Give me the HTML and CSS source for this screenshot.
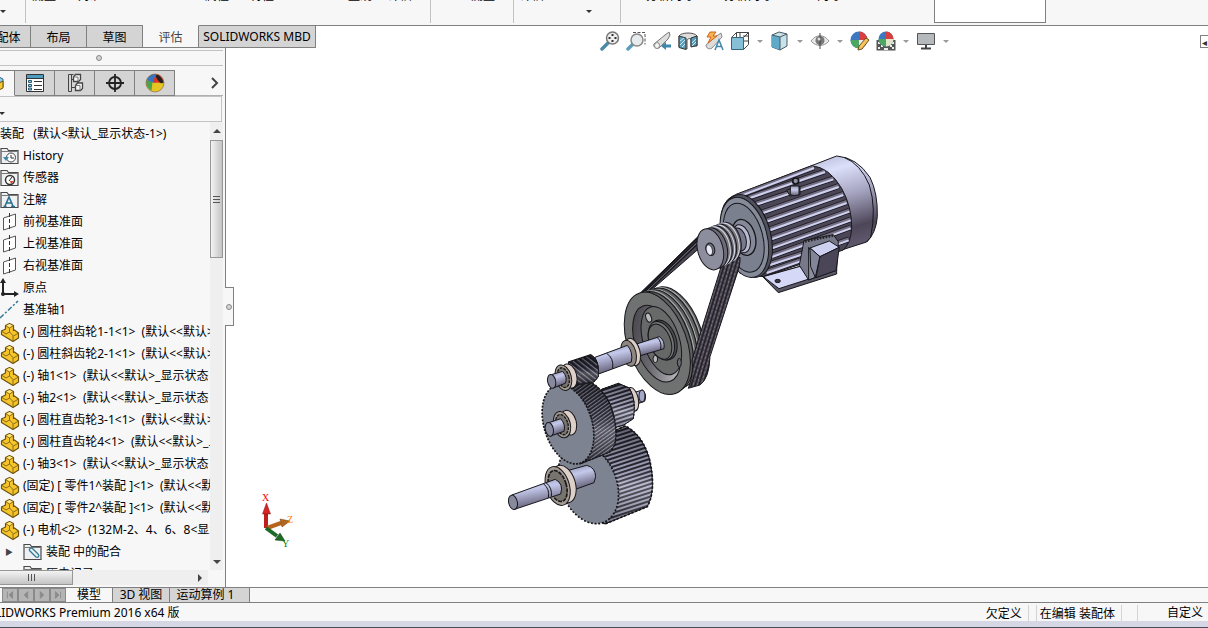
FILE: index.html
```html
<!DOCTYPE html>
<html lang="zh-CN">
<head>
  <meta charset="utf-8">
  <title>SOLIDWORKS Premium 2016 x64 版</title>
  <link rel="stylesheet" href="styles.css">
</head>
<body>
  <svg class="defs" width="0" height="0" aria-hidden="true">
    <symbol id="part" viewBox="0 0 20 20">
      <path d="M1.500 9l4-2V3.500l4-2 4 2v5l1-.5 4 3v5l-5.500 3.500-11.500-7z" fill="#f6c52b" stroke="#6b5210" stroke-width="1.200" stroke-linejoin="round"/>
      <path d="M5.500 3.500l4 2.500 4-2.500M9.500 6v4l-3.500 2-4.500-3M9.500 10l4 4 5-3M13 14v5.500" fill="none" stroke="#8a6a14"/>
      <path d="M6.500 3.500l3-1.500 3 1.500-3 1.700z" fill="#ffe680"/>
    </symbol>
    <symbol id="folder" viewBox="0 0 20 20">
      <path d="M1 17.500V2.500h6l1.500 2h9.500v13z" fill="#eef0f2" stroke="#4a4a4a" stroke-width="1.200"/>
      <path d="M1.500 5.500h16" stroke="#777"/>
    </symbol>
    <symbol id="plane" viewBox="0 0 20 20">
      <path d="M3.500 6l12-4v12l-12 4z" fill="#fff" stroke="#555"/>
      <path d="M9.500 1v18" stroke="#333" stroke-dasharray="4 2"/>
    </symbol>
  </svg>

  <header class="ribbon">
    <button class="more" aria-label="更多"></button>
    <button class="cmd c1">测量</button>
    <button class="cmd c2">对准</button>
    <button class="cmd c3">属性</button>
    <button class="cmd c4">特性</button>
    <button class="cmd c5">直观</button>
    <button class="cmd c6">评估</button>
    <span class="sep"></span>
    <button class="cmd c7">测量</button>
    <span class="sep"></span>
    <button class="cmd c8">评估</button>
    <button class="more-down" aria-label="更多评估"></button>
    <span class="sep"></span>
    <button class="cmd c9">分析向导</button>
    <button class="cmd c10">分析向导</button>
    <button class="cmd c11">向导</button>
    <div class="ribbon-box"></div>
  </header>

  <div class="command-row">
    <nav class="tabs">
      <button class="tab first">装配体</button>
      <button class="tab">布局</button>
      <button class="tab">草图</button>
      <button class="tab active">评估</button>
      <button class="tab wide">SOLIDWORKS MBD</button>
    </nav>
    <div class="view-tools">
      <button class="tool" aria-label="整屏显示全图"><svg viewBox="0 0 20 20"><path d="M2 18l6-6" stroke="#4c88a8" stroke-width="3.500" stroke-linecap="round"/><circle cx="12.500" cy="7" r="6" fill="#eee" stroke="#777" stroke-width="1.500"/><path d="M12.500 3v2M12.500 9v2M8.500 7h2M14.500 7h2" stroke="#333" stroke-width="2"/></svg></button>
      <button class="tool" aria-label="局部放大"><svg viewBox="0 0 20 20"><path d="M7 1.500h12v12" fill="none" stroke="#555" stroke-dasharray="3 1.500"/><path d="M2 18l5-5" stroke="#5a9dbd" stroke-width="3.500" stroke-linecap="round"/><circle cx="11" cy="9" r="6" fill="#e6ebed" stroke="#888" stroke-width="1.500"/></svg></button>
      <button class="tool" aria-label="上一视图"><svg viewBox="0 0 20 20"><path d="M2 13L13 4l4-3 1 3-2 4-9 9c-3 1-6-1-5-4z" fill="#ddd" stroke="#777"/><ellipse cx="5" cy="14.500" rx="2.500" ry="3" fill="#f5f5f5" stroke="#888"/><path d="M9 15l5-4v2.500h5v3h-5V19z" fill="#3e87aa"/></svg></button>
      <button class="tool" aria-label="剖面视图"><svg viewBox="0 0 20 20"><path d="M1 5c2-4 16-4 18 0v10h-6V8c-2-1-3 0-4 1v9l-8-2z" fill="#ddd" stroke="#555"/><path d="M1 5l7 2v11.500l-7-2zM13 7l6-2v9.500l-6 1.500z" fill="#5aa0bd" stroke="#333"/><path d="M2 10l4-3M2 14l5-5M4 16l3-3M14 12l4-4M14 15l4-4" stroke="#cde7f0"/></svg></button>
      <button class="tool" aria-label="动态注解视图"><svg viewBox="0 0 20 20"><path d="M2 14l9-8 6-4 1 4-10 11c-3 2-6 0-6-3z" fill="#ddd" stroke="#888"/><path d="M6 1h6L9 5h4L4 12l3-6H3z" fill="#f5b44c" stroke="#d3601f"/><path d="M11 19l4-10 4 10M12.500 15.500h5" fill="none" stroke="#3e87aa" stroke-width="1.500"/></svg></button>
      <button class="tool" aria-label="视图定向"><svg viewBox="0 0 20 20"><path d="M1.500 6.500l5-5h12v12l-5 5M13.500 6.500l5-5M6.500 1.500v5M10 1v5M13 5h5M13 10h5" fill="none" stroke="#444"/><path d="M1.500 6.500h12v12h-12z" fill="#86bfd6" stroke="#34667d"/></svg></button>
      <button class="drop" aria-label="更多视图定向"></button>
      <button class="tool" aria-label="显示样式"><svg viewBox="0 0 20 20"><path d="M2 4l7-3 8 2v12l-7 4-8-3z" fill="#c8e2ec" stroke="#4a5961"/><path d="M2 4l8 2v13l-8-3z" fill="#5faac8"/><path d="M2 4l8 2 7-3M10 6v13" fill="none" stroke="#4a5961"/></svg></button>
      <button class="drop" aria-label="更多显示样式"></button>
      <button class="tool" aria-label="隐藏/显示项目"><svg viewBox="0 0 20 20"><path d="M1 10c5-7 13-7 18 0-5 6-13 6-18 0z" fill="#e8e8e8" stroke="#999"/><circle cx="10" cy="9.500" r="4.500" fill="#777"/><path d="M10 2v16" stroke="#444"/><circle cx="9" cy="8" r="1.500" fill="#ddd"/></svg></button>
      <button class="drop" aria-label="更多显示项目"></button>
      <button class="tool" aria-label="编辑外观"><svg viewBox="0 0 20 20"><circle cx="9" cy="9" r="8.500" fill="#3c78c0"/><path d="M9 .5a8.500 8.500 0 018.500 8.500H9z" fill="#d84040"/><path d="M.5 9H9v8.500A8.500 8.500 0 01.5 9z" fill="#4ca760"/><path d="M9 9h8.500A8.500 8.500 0 019 17.500z" fill="#eee"/><path d="M8 19l1-4 7-8 3 2-7 9z" fill="#f7c45c" stroke="#6d4d21"/></svg></button>
      <button class="tool" aria-label="应用布景"><svg viewBox="0 0 20 20"><path d="M.5 9h19v10.500H.5z" fill="#555"/><path d="M2 11h2v2H2zM16 11h2v2h-2zM5 14h2v2H5zM2 16h2v2H2zM8 17h4v2H8zM14 14h2v2h-2zM16 16h2v2h-2z" fill="#eee"/><circle cx="10" cy="8" r="7.500" fill="#3c78c0"/><path d="M10 .5A7.500 7.500 0 0117.500 8H10z" fill="#d84040"/><path d="M2.500 8H10v7.500A7.500 7.500 0 012.500 8z" fill="#4ca760"/><path d="M10 8h7.500a7.500 7.500 0 01-7.500 7.500z" fill="#dfe6c8"/></svg></button>
      <button class="drop" aria-label="更多布景"></button>
      <button class="tool" aria-label="视图设定"><svg viewBox="0 0 20 20"><path d="M1.500 2.500h17v11h-17z" fill="#b5b9bc" stroke="#555"/><path d="M10 14v3M5 17.500h10" stroke="#444" stroke-width="2"/></svg></button>
      <button class="drop" aria-label="更多视图设定"></button>
    </div>
    <button class="pane-toggle" aria-label="展开任务窗格">◂</button>
  </div>

  <main class="workspace">
    <aside class="panel">
      <div class="grip"><i class="dot"></i></div>
      <div class="feature-tabs">
        <button class="ftab first active" aria-label="特征树"><svg viewBox="0 0 20 20"><path d="M2 6l8-4 8 4v8l-8 4-8-4z" fill="#8fcbe6" stroke="#34667d"/><path d="M10 12l8-4v7l-8 4z" fill="#f3c92f" stroke="#6b5210"/></svg></button>
        <button class="ftab" aria-label="属性"><svg viewBox="0 0 20 20"><path d="M1.500 1.500h17v17h-17z" fill="#fff" stroke="#333"/><path d="M2 2h16v3H2z" fill="#4c9cc0"/><path d="M2 5.500h16" stroke="#333"/><path d="M3.500 7.500h3v2h-3zM3.500 11.500h3v2h-3zM3.500 15h3v2h-3z" fill="#9bd0e4" stroke="#245a75"/><path d="M9 8.500h8M9 12.500h8M9 16.500h8" stroke="#333"/></svg></button>
        <button class="ftab" aria-label="配置"><svg viewBox="0 0 20 20"><path d="M3.500 1.500h5M3.500 1.500v17h3v-17M6.500 6.500h3M6.500 14.500h4" fill="none" stroke="#444"/><path d="M8.500 4l2-2.500h5v5l-2 2h-5zM10.500 12.500l2-2.500h5v5.500l-2 2h-5z" fill="#f7f7f7" stroke="#444" stroke-width="1.300"/><path d="M8.500 4h4.500v4.500M10.500 12.500H15v5" fill="none" stroke="#777"/></svg></button>
        <button class="ftab" aria-label="尺寸专家"><svg viewBox="0 0 20 20"><circle cx="10" cy="10" r="6" fill="none" stroke="#222" stroke-width="1.800"/><path d="M10 1v18M1 10h18" stroke="#222" stroke-width="1.800"/></svg></button>
        <button class="ftab" aria-label="显示"><svg viewBox="0 0 20 20"><circle cx="10" cy="10" r="9" fill="#e5c522"/><path d="M10 10L2 7C4 2 8 1 11 1z" fill="#3476c4"/><path d="M1.500 7l6 2-1 8.500C2 15 .5 11 1.500 7z" fill="#48a34c"/><path d="M10 1c5 0 8 3 9 9l-11.500-.5z" fill="#da3327"/><path d="M2 7c1-4 5-6 9-6L7.500 9.500z" fill="#3476c4"/><ellipse cx="14.500" cy="6" rx="2" ry="5" transform="rotate(-38 14.500 6)" fill="#222"/><circle cx="10" cy="10" r="9" fill="none" stroke="#8a6a4a" stroke-width=".7"/></svg></button>
        <button class="expand" aria-label="展开"><svg viewBox="0 0 10 12"><path d="M2 1l5 5-5 5" fill="none" stroke="#444" stroke-width="2"/></svg></button>
      </div>
      <div class="filter"><button class="drop dark" aria-label="过滤器"></button><input type="text" aria-label="过滤特征树"></div>
      <div class="tree-area">
        <ul class="tree">
          <li class="root">装配&nbsp;&nbsp; (默认&lt;默认_显示状态-1&gt;)</li>
          <li><svg viewBox="0 0 20 20"><use href="#folder"/><circle cx="11" cy="11.500" r="4.500" fill="#fff" stroke="#444"/><path d="M11 9v3h3" fill="none" stroke="#333"/><path d="M3 11h6l-3 4z" fill="#3c86a8"/></svg>History</li>
          <li><svg viewBox="0 0 20 20"><use href="#folder"/><circle cx="10" cy="12" r="4.500" fill="#fff" stroke="#333" stroke-width="1.500"/><path d="M9 13l3-4" stroke="#222"/><path d="M10 13h4l-3 3z" fill="#d8411f"/></svg>传感器</li>
          <li><svg viewBox="0 0 20 20"><use href="#folder"/><path d="M5 16l4-9 4 9M6.500 13h5M3.500 16.500h3M11 16.500h4" fill="none" stroke="#2a7092" stroke-width="1.600"/></svg>注解</li>
          <li><svg><use href="#plane"/></svg>前视基准面</li>
          <li><svg><use href="#plane"/></svg>上视基准面</li>
          <li><svg><use href="#plane"/></svg>右视基准面</li>
          <li><svg viewBox="0 0 20 20"><path d="M3 3v13h13" fill="none" stroke="#222" stroke-width="2"/><path d="M3 0l3 5H0zM19 16l-5-3v6z" fill="#222"/><circle cx="3" cy="16" r="2" fill="#222"/></svg>原点</li>
          <li><svg viewBox="0 0 20 20"><path d="M0 18L18 1" stroke="#2f7898" stroke-width="1.500" stroke-dasharray="5 2 2 2"/></svg>基准轴1</li>
          <li><svg><use href="#part"/></svg>(-) 圆柱斜齿轮1-1&lt;1&gt;&nbsp; (默认&lt;&lt;默认&gt;_显示状态 1&gt;)</li>
          <li><svg><use href="#part"/></svg>(-) 圆柱斜齿轮2-1&lt;1&gt;&nbsp; (默认&lt;&lt;默认&gt;_显示状态 1&gt;)</li>
          <li><svg><use href="#part"/></svg>(-) 轴1&lt;1&gt;&nbsp; (默认&lt;&lt;默认&gt;_显示状态 1&gt;)</li>
          <li><svg><use href="#part"/></svg>(-) 轴2&lt;1&gt;&nbsp; (默认&lt;&lt;默认&gt;_显示状态 1&gt;)</li>
          <li><svg><use href="#part"/></svg>(-) 圆柱直齿轮3-1&lt;1&gt;&nbsp; (默认&lt;&lt;默认&gt;_显示状态 1&gt;)</li>
          <li><svg><use href="#part"/></svg>(-) 圆柱直齿轮4&lt;1&gt;&nbsp; (默认&lt;&lt;默认&gt;_显示状态 1&gt;)</li>
          <li><svg><use href="#part"/></svg>(-) 轴3&lt;1&gt;&nbsp; (默认&lt;&lt;默认&gt;_显示状态 1&gt;)</li>
          <li><svg><use href="#part"/></svg>(固定) [ 零件1^装配 ]&lt;1&gt;&nbsp; (默认&lt;&lt;默认&gt;</li>
          <li><svg><use href="#part"/></svg>(固定) [ 零件2^装配 ]&lt;1&gt;&nbsp; (默认&lt;&lt;默认&gt;</li>
          <li><svg><use href="#part"/></svg>(-) 电机&lt;2&gt;&nbsp; (132M-2、4、6、8&lt;显示状态&gt;)</li>
          <li class="child"><span class="twisty">▶</span><svg viewBox="0 0 20 20"><use href="#folder"/><path d="M13 15l-6-6c-2-2 1-4 3-2l5 5c2 2 0 4-2 3l-5-5" fill="none" stroke="#2f7898" stroke-width="1.300"/></svg>装配 中的配合</li>
          <li class="child"><span class="twisty"></span><svg><use href="#folder"/></svg>历史记录</li>
        </ul>
        <div class="vscroll"><span class="up"></span><span class="thumb"></span><span class="down"></span></div>
      </div>
      <div class="hscroll"><span class="thumb"></span><span class="right"></span></div>
      <button class="splitter" aria-label="隐藏面板"><i class="dot"></i></button>
    </aside>

    <section class="viewport">
      <svg class="scene" viewBox="226 48 982 539" role="img" aria-label="带传动减速器装配模型">
        <defs>
          <linearGradient id="metal" x1="0" y1="0" x2="0" y2="1"><stop offset="0" stop-color="#9a9dbb"/><stop offset=".4" stop-color="#c9cbea"/><stop offset="1" stop-color="#5d5970"/></linearGradient>
          <linearGradient id="shaft" x1="0" y1="0" x2=".3" y2="1"><stop offset="0" stop-color="#8a8ca8"/><stop offset=".4" stop-color="#c4c8ea"/><stop offset="1" stop-color="#5d5970"/></linearGradient>
          <linearGradient id="cap" x1="0" y1="0" x2=".2" y2="1"><stop offset="0" stop-color="#b4b8d4"/><stop offset=".2" stop-color="#dcdffa"/><stop offset=".5" stop-color="#a5a4c0"/><stop offset=".85" stop-color="#4d4658"/><stop offset="1" stop-color="#5d566a"/></linearGradient>
          <linearGradient id="rim" x1="0" y1="0" x2="1" y2="1"><stop offset="0" stop-color="#3c3940"/><stop offset=".45" stop-color="#6b6970"/><stop offset="1" stop-color="#d6d6da"/></linearGradient>
          <linearGradient id="lit" x1="0" y1="0" x2="0" y2="1"><stop offset="0" stop-color="#000" stop-opacity=".45"/><stop offset=".4" stop-color="#000" stop-opacity=".1"/><stop offset=".6" stop-color="#fff" stop-opacity=".2"/><stop offset="1" stop-color="#000" stop-opacity=".3"/></linearGradient>
          <pattern id="helix" width="10" height="9" patternUnits="userSpaceOnUse" patternTransform="rotate(-36)"><path d="M0 0h10v9H0z" fill="#25232c"/><path d="M0 5h10" stroke="#a9abc4" stroke-width="3"/></pattern>
          <pattern id="helix2" width="10" height="12" patternUnits="userSpaceOnUse" patternTransform="rotate(38)"><path d="M0 0h10v12H0z" fill="#211f28"/><path d="M0 5h10" stroke="#9a9cb6" stroke-width="3"/></pattern>
          <pattern id="spur" width="10" height="12" patternUnits="userSpaceOnUse" patternTransform="rotate(-18)"><path d="M0 0h10v12H0z" fill="#2b2832"/><path d="M0 6h10" stroke="#c4c7e6" stroke-width="5"/></pattern>
          <pattern id="belt" width="11" height="14" patternUnits="userSpaceOnUse" patternTransform="rotate(17)"><path d="M0 0h11v14H0z" fill="#47434f"/><path d="M2 0v14" stroke="#111" stroke-width="3"/><path d="M7 0v9" stroke="#8a8796" stroke-width="2"/></pattern>
        </defs>

        <!-- motor -->
        <g transform="translate(690 150) scale(.3333)" stroke="#17161b" stroke-width="3" stroke-linejoin="round">
          <path d="M365 47L440 18Q500 22 540 82Q564 130 562 200Q558 250 530 276L455 300z" fill="url(#cap)"/>
          <path d="M462 22Q512 42 538 105Q560 175 542 262L530 276" fill="none"/>
          <path d="M92 215Q92 155 130 137L365 47Q418 52 455 115Q486 170 485 235Q482 280 460 300L220 380L150 370z" fill="#4a4656"/>
          <g stroke="#1c1a22" stroke-width="17">
            <path d="M140 140L372 52M168 146L405 64M190 164L430 85M208 190L446 108M224 214L460 132M234 240L470 156M242 266L478 182M246 292L482 208M246 318L482 232M240 342L345 308M230 366L340 328M440 281L476 268"/>
          </g>
          <g stroke="#756f82" stroke-width="12">
            <path d="M140 140L372 52M168 146L405 64M190 164L430 85M208 190L446 108M224 214L460 132M234 240L470 156M242 266L478 182M246 292L482 208M246 318L482 232M240 342L345 308M230 366L340 328M440 281L476 268"/>
          </g>
          <g stroke="#ced1f0" stroke-width="6">
            <path d="M140 142L372 54M168 148L405 66M190 167L430 88M208 193L446 111M224 217L460 135M234 243L470 159M242 269L478 185M246 295L482 211M246 321L482 235M240 345L345 311M230 369L340 331M440 284L476 271"/>
          </g>
          <ellipse cx="172" cy="258" rx="70" ry="127" transform="rotate(-15 172 258)" fill="#50515e"/>
          <ellipse cx="163" cy="262" rx="68" ry="123" transform="rotate(-15 163 262)" fill="#858b99"/>
          <ellipse cx="161" cy="263" rx="57" ry="106" transform="rotate(-15 161 263)" fill="#7b808e"/>
          <ellipse cx="162" cy="262" rx="34" ry="55" transform="rotate(-15 162 262)" fill="#858998" stroke-width="4"/>
          <ellipse cx="155" cy="266" rx="25" ry="43" transform="rotate(-15 155 266)" fill="#b8bad0"/>
          <ellipse cx="148" cy="268" rx="20" ry="35" transform="rotate(-15 148 268)" fill="#777a8b"/>
          <!-- foot and terminal box -->
          <path d="M218 380L342 346L360 385L440 358V372L265 428z" fill="#5a5767"/>
          <path d="M220 380L342 346L357 387L267 416z" fill="#d5d8f6"/>
          <ellipse cx="263" cy="393" rx="8" ry="5" fill="#3a3842"/>
          <path d="M328 346L342 272L430 254L445 275L440 360L356 390z" fill="#77798a"/>
          <path d="M345 274L432 256" stroke="#222" stroke-width="8" stroke-dasharray="5 4"/>
          <path d="M356 292L372 318L376 382L356 390z" fill="#8d8fa0"/>
          <path d="M360 294L418 273L448 292L390 320z" fill="#cdd0ee"/>
          <path d="M360 294L390 320L376 382L362 350z" fill="#82859a"/>
          <path d="M390 320L448 292L438 362L378 383z" fill="#4b4657"/>
          <!-- lifting eye -->
          <path d="M290 120L330 110V134L300 138z" fill="#5c5866"/>
          <path d="M301 108h26v26q-13 7-26 0z" fill="url(#metal)"/>
          <circle cx="317" cy="93" r="9" fill="#8d8fa0" stroke-width="5"/>
        </g>

        <g transform="translate(620 140) scale(.3333)" stroke="#17161b" stroke-width="3" stroke-linejoin="round">
          <!-- slack side belts -->
          <path d="M236 288L232 330L92 452L58 462z" fill="#4b4753"/>
          <path d="M234 300L74 456M233 312L84 454M236 290L64 460" stroke-width="4"/>
          <path d="M234 306L80 454" stroke="#85828f" stroke-width="2"/>
          <!-- driven pulley -->
          <g fill="#5f6060">
            <ellipse cx="164" cy="584" rx="80" ry="150" transform="rotate(-20 164 584)"/>
            <ellipse cx="156" cy="588" rx="82" ry="152" transform="rotate(-20 156 588)" stroke="#b2b3b3"/>
            <ellipse cx="152" cy="590" rx="82" ry="152" transform="rotate(-20 152 590)"/>
            <ellipse cx="143" cy="595" rx="82" ry="153" transform="rotate(-20 143 595)" stroke="#b2b3b3"/>
            <ellipse cx="139" cy="597" rx="83" ry="154" transform="rotate(-20 139 597)"/>
            <ellipse cx="130" cy="601" rx="83" ry="155" transform="rotate(-20 130 601)" stroke="#b2b3b3"/>
            <ellipse cx="125" cy="604" rx="84" ry="156" transform="rotate(-20 125 604)"/>
          </g>
          <ellipse cx="112" cy="610" rx="88" ry="160" transform="rotate(-20 112 610)" fill="#707171"/>
          <ellipse cx="110" cy="611" rx="63" ry="120" transform="rotate(-20 110 611)" fill="url(#rim)"/>
          <ellipse cx="124" cy="602" rx="54" ry="106" transform="rotate(-18 124 602)" fill="#686969"/>
          <g fill="#b9b9bd">
            <ellipse cx="86" cy="533" rx="8" ry="14" transform="rotate(-20 86 533)"/>
            <ellipse cx="106" cy="657" rx="7" ry="11"/>
            <ellipse cx="178" cy="668" rx="6" ry="13" fill="#6b6970"/>
          </g>
          <ellipse cx="130" cy="600" rx="38" ry="62" transform="rotate(-20 130 600)" fill="#4b4c4d"/>
          <ellipse cx="124" cy="602" rx="36" ry="60" transform="rotate(-20 124 602)" fill="#747575"/>
          <ellipse cx="120" cy="605" rx="32" ry="55" transform="rotate(-20 120 605)" fill="#666767"/>
          <!-- tight side belts -->
          <path d="M305 375L330 360L360 352Q362 372 350 405L270 650Q268 715 240 735L205 745Q222 700 216 660z" fill="url(#belt)"/>
          <!-- motor pulley -->
          <g>
            <ellipse cx="326" cy="304" rx="36" ry="58" transform="rotate(-15 326 304)" fill="#6d6b7a"/>
            <ellipse cx="320" cy="307" rx="36" ry="59" transform="rotate(-15 320 307)" fill="#777" stroke="#d9dbec"/>
            <ellipse cx="311" cy="311" rx="37" ry="60" transform="rotate(-15 311 311)" fill="#6d6b7a"/>
            <ellipse cx="305" cy="314" rx="37" ry="60" transform="rotate(-15 305 314)" fill="#777" stroke="#d9dbec"/>
            <ellipse cx="297" cy="317" rx="38" ry="61" transform="rotate(-15 297 317)" fill="#6d6b7a"/>
            <ellipse cx="291" cy="320" rx="38" ry="61" transform="rotate(-15 291 320)" fill="#777" stroke="#d9dbec"/>
            <ellipse cx="283" cy="324" rx="38" ry="62" transform="rotate(-15 283 324)" fill="#6d6b7a"/>
            <ellipse cx="271" cy="328" rx="38" ry="63" transform="rotate(-15 271 328)" fill="#8c8d9d"/>
            <ellipse cx="271" cy="328" rx="13" ry="19" transform="rotate(-15 271 328)" fill="#6e6f7d"/>
            <ellipse cx="268" cy="330" rx="9" ry="16" transform="rotate(-15 268 330)" fill="#e9eaf8" stroke-width="2"/>
          </g>
        </g>

        <g transform="translate(490 330) scale(.3333)" stroke="#17161b" stroke-width="3" stroke-linejoin="round">
          <!-- input shaft -->
          <path d="M440 42L508 20Q526 32 522 56L448 78z" fill="url(#shaft)"/>
          <path d="M502 23Q516 34 512 58" fill="none"/>
          <ellipse cx="428" cy="66" rx="22" ry="42" transform="rotate(-15 428 66)" fill="#d9cdc5"/>
          <ellipse cx="416" cy="70" rx="22" ry="40" transform="rotate(-15 416 70)" fill="#8d8780"/>
          <path d="M315 82L412 46Q430 66 424 96L326 132z" fill="url(#shaft)"/>
          <path d="M350 70Q372 84 368 116" fill="none"/>
          <!-- spur pinion and its shaft end -->
          <path d="M430 188L458 180Q472 194 464 214L434 224z" fill="url(#shaft)"/>
          <ellipse cx="456" cy="198" rx="9" ry="18" fill="#a5a8c8"/>
          <ellipse cx="428" cy="208" rx="17" ry="36" transform="rotate(-12 428 208)" fill="#d9cdc5"/>
          <path d="M335 178L385 160L418 174Q440 210 430 266L400 286L350 300z" fill="url(#spur)"/>
          <path d="M335 178L385 160L418 174Q440 210 430 266L400 286L350 300z" fill="url(#lit)" stroke-dasharray="6 4"/>
          <!-- large spur gear -->
          <path d="M290 340L405 288Q455 310 478 385Q500 480 472 530L345 582L300 560z" fill="url(#spur)"/>
          <path d="M290 340L405 288Q455 310 478 385Q500 480 472 530L345 582L300 560z" fill="url(#lit)" stroke-width="5" stroke-dasharray="7 5"/>
          <ellipse cx="295" cy="462" rx="84" ry="124" transform="rotate(-22 295 462)" fill="#7e8392" stroke-width="5" stroke-dasharray="6 5"/>
          <!-- large helical gear -->
          <path d="M200 168L280 150Q330 160 360 222Q386 290 374 345L360 366L270 402z" fill="url(#helix)"/>
          <path d="M200 168L280 150Q330 160 360 222Q386 290 374 345L360 366L270 402z" fill="url(#lit)" stroke-width="4" stroke-dasharray="6 5"/>
          <ellipse cx="234" cy="283" rx="72" ry="122" transform="rotate(-17 234 283)" fill="#7e8392" stroke-width="5" stroke-dasharray="6 4"/>
          <!-- helical pinion -->
          <path d="M235 96L302 74Q330 88 325 140L312 156L250 166z" fill="url(#helix2)"/>
          <path d="M235 96L302 74Q330 88 325 140L312 156L250 166z" fill="url(#lit)" stroke-dasharray="7 3"/>
          <g>
            <ellipse cx="238" cy="138" rx="22" ry="37" transform="rotate(-15 238 138)" fill="#dcd0c8"/>
            <ellipse cx="220" cy="143" rx="24" ry="39" transform="rotate(-15 220 143)" fill="#a39b92"/>
            <ellipse cx="220" cy="143" rx="17" ry="30" transform="rotate(-15 220 143)" fill="#77736d" stroke-width="4" stroke-dasharray="9 3"/>
            <path d="M184 134L218 124Q234 142 226 160L190 174z" fill="url(#shaft)"/>
            <ellipse cx="185" cy="154" rx="12" ry="21" transform="rotate(-12 185 154)" fill="#868a9c"/>
          </g>
          <g>
            <ellipse cx="236" cy="278" rx="23" ry="38" transform="rotate(-15 236 278)" fill="#dcd0c8"/>
            <ellipse cx="216" cy="284" rx="25" ry="40" transform="rotate(-15 216 284)" fill="#a39b92"/>
            <ellipse cx="216" cy="284" rx="18" ry="31" transform="rotate(-15 216 284)" fill="#77736d" stroke-width="4" stroke-dasharray="9 3"/>
            <path d="M176 278L212 266Q228 284 222 304L182 318z" fill="url(#shaft)"/>
            <ellipse cx="178" cy="298" rx="12" ry="21" transform="rotate(-12 178 298)" fill="#868a9c"/>
          </g>
          <!-- output shaft -->
          <path d="M225 424L290 406Q316 412 317 440L312 458L240 484z" fill="url(#shaft)"/>
          <ellipse cx="222" cy="462" rx="34" ry="58" transform="rotate(-17 222 462)" fill="#dcd0c8"/>
          <ellipse cx="203" cy="468" rx="35" ry="60" transform="rotate(-17 203 468)" fill="#a39b92"/>
          <ellipse cx="203" cy="468" rx="26" ry="48" transform="rotate(-17 203 468)" fill="#77736d" stroke-width="5" stroke-dasharray="12 3"/>
          <path d="M66 495L196 448Q222 462 212 492L74 538z" fill="url(#shaft)"/>
          <path d="M160 461Q180 476 175 504M168 458Q188 474 184 500" fill="none"/>
          <ellipse cx="69" cy="517" rx="13" ry="22" transform="rotate(-12 69 517)" fill="#868a9c"/>
        </g>

        <!-- triad -->
        <g class="triad">
          <path d="M266 528V512" stroke="#c01d1d" stroke-width="4"/><path d="M266.500 503l4 11h-8z" fill="#d92525" stroke="#7a1010" stroke-width=".5"/>
          <path d="M267 528L281 523" stroke="#b5651d" stroke-width="4"/><path d="M290 521l-10-2 2 8z" fill="#b5651d" stroke="#6b390c" stroke-width=".5"/>
          <path d="M266 528L277 536" stroke="#1d6b26" stroke-width="4"/><path d="M285 541l-10-1 5-7z" fill="#1d6b26" stroke="#0d3a13" stroke-width=".5"/>
          <text x="262" y="501" fill="#f00">X</text>
          <text x="287" y="523" fill="#ff8000">Z</text>
          <text x="282" y="547" fill="#008000">Y</text>
        </g>
      </svg>
    </section>
  </main>

  <nav class="bottom-tabs">
    <div class="pager">
      <button aria-label="第一个"><svg viewBox="0 0 14 14"><path d="M4 3v8M10 3L6 7l4 4z"/></svg></button>
      <button aria-label="上一个"><svg viewBox="0 0 14 14"><path d="M9 3L5 7l4 4z"/></svg></button>
      <button aria-label="下一个"><svg viewBox="0 0 14 14"><path d="M5 3l4 4-4 4z"/></svg></button>
      <button aria-label="最后一个"><svg viewBox="0 0 14 14"><path d="M10 3v8M4 3l4 4-4 4z"/></svg></button>
    </div>
    <button class="btab active">模型</button>
    <button class="btab">3D 视图</button>
    <button class="btab study">运动算例 1</button>
  </nav>

  <footer class="status">
    <span class="product">SOLIDWORKS Premium 2016 x64 版</span>
    <span class="cell">欠定义</span>
    <span class="cell edit">在编辑 装配体</span>
    <span class="cell gap"></span>
    <span class="custom">自定义</span>
  </footer>
  <div class="window-edge"></div>
</body>
</html>
```

FILE: styles.css
```css
* {
  box-sizing: border-box;
}

body {
  display: flex;
  flex-direction: column;
  height: 100vh;
  margin: 0;
  overflow: hidden;
  background: #f7f7f7;
  color: #000;
  font: 12px "Noto Sans", "Noto Sans CJK SC", sans-serif;
}

button {
  margin: 0;
  padding: 0;
  border: 0;
  background: none;
  color: inherit;
  font: inherit;
  white-space: nowrap;
}

svg {
  display: block;
}

.defs {
  position: absolute;
}

/* ribbon */
.ribbon {
  display: flex;
  align-items: flex-start;
  flex: none;
  height: 26px;
  overflow: hidden;
  border-bottom: 1px solid #808080;
}

.cmd {
  flex: none;
  height: 18px;
  margin-top: -13px;
  text-align: right;
  line-height: 18px;
}

.more {
  flex: none;
  width: 26px;
  height: 23px;
  border-right: 1px solid #c3c3c3;
}

.more-down {
  flex: none;
  width: 6px;
  height: 23px;
  margin-left: 42px;
}

.more::after,
.more-down::after {
  content: "";
  display: block;
  width: 0;
  border: 3px solid transparent;
  border-top-color: #333;
  border-bottom: 0;
}

.sep {
  flex: none;
  width: 1px;
  height: 23px;
  margin-left: 18px;
  background: #c3c3c3;
}

.more-down + .sep {
  margin-left: 28px;
}

.c1 { width: 30px; }
.c2 { width: 46px; }
.c3 { width: 127px; }
.c4 { width: 45px; }
.c5 { width: 98px; }
.c6 { width: 40px; }
.c7 { width: 64px; }
.c8 { width: 30px; }
.c9 { width: 73px; }
.c10 { width: 78px; }
.c11 { width: 69px; }

.ribbon-box {
  flex: none;
  width: 112px;
  height: 23px;
  margin-left: 93px;
  border: 1px solid #808080;
  border-top: 0;
  background: #fff;
}

/* command tabs and view tools */
.command-row {
  display: flex;
  flex: none;
  align-items: flex-start;
  height: 23px;
  margin-top: -1px;
  position: relative;
  z-index: 2;
  background: linear-gradient(#808080 1px, #fff 1px);
}

.tabs {
  display: flex;
  flex: none;
}

.tab {
  width: 56px;
  height: 23px;
  border: 1px solid #808080;
  border-left: 0;
  background: #d4d4d4;
}

.tab.first {
  margin-left: -25px;
}

.tab.active {
  border-color: #f7f7f7 #808080 #808080;
  background: #f7f7f7;
  color: #444;
}

.tab.wide {
  width: 117px;
}

.view-tools {
  display: flex;
  flex: none;
  margin: 5px 0 0 281px;
}

.tool {
  width: 26px;
  height: 22px;
  padding: 0 3px;
}

.tool svg {
  width: 20px;
  height: 20px;
}

.drop {
  display: flex;
  align-items: center;
  justify-content: center;
  width: 14px;
  height: 22px;
}

.drop::after {
  content: "";
  border: 3px solid transparent;
  border-top-color: #999;
  border-bottom: 0;
}

.drop.dark::after {
  border-top-color: #333;
}

.pane-toggle {
  width: 8px;
  height: 13px;
  margin: 10px 0 0 auto;
  border: 1px solid #808080;
  border-right: 0;
  color: #333;
  font-size: 10px;
  line-height: 10px;
}

/* left panel */
.workspace {
  display: flex;
  flex: 1;
  min-height: 0;
}

.panel {
  position: relative;
  display: flex;
  flex: none;
  flex-direction: column;
  width: 226px;
  padding: 2px 2px 17px 0;
  border-right: 1px solid #808080;
}

.grip {
  display: flex;
  flex: none;
  align-items: center;
  justify-content: center;
  height: 16px;
  padding-right: 26px;
  border: 1px solid #c3c3c3;
  border-width: 1px 0;
}

.dot {
  width: 6px;
  height: 6px;
  border: 1px solid #8a8a8a;
  border-radius: 50%;
  background: #d4d4d4;
}

.feature-tabs {
  display: flex;
  flex: none;
  height: 26px;
  margin-top: 4px;
  border-bottom: 1px solid #b0b0b0;
}

.ftab {
  flex: none;
  display: flex;
  align-items: center;
  justify-content: center;
  width: 40px;
  height: 26px;
  border: 1px solid #808080;
  border-left: 0;
  background: #d4d4d4;
}

.ftab svg {
  width: 20px;
  height: 20px;
}

.ftab.first {
  margin-left: -25px;
}

.ftab.active {
  border-color: #808080;
  border-bottom-color: #f7f7f7;
  background: #f7f7f7;
}

.expand {
  margin: 0 3px 0 auto;
}

.expand svg {
  width: 10px;
  height: 12px;
}

.filter {
  display: flex;
  flex: none;
  height: 26px;
  margin-right: 1px;
  border: 1px solid #c3c3c3;
  border-left: 0;
}

.filter .drop {
  width: 4px;
  height: 32px;
}

.filter input {
  flex: 1;
  min-width: 0;
  border: 0;
  background: none;
  font: inherit;
}

.tree-area {
  display: flex;
  flex: 1;
  min-height: 0;
}

.tree {
  flex: 1;
  min-width: 0;
  height: 100%;
  margin: 0;
  padding: 1px 0 0;
  overflow: hidden;
  list-style: none;
}

.tree li {
  display: flex;
  align-items: center;
  gap: 3px;
  height: 22px;
  line-height: 22px;
  white-space: nowrap;
}

.tree svg {
  flex: none;
  width: 20px;
  height: 20px;
}

.twisty {
  width: 20px;
  padding-left: 5px;
  color: #444;
  font-size: 8px;
}

.vscroll {
  display: flex;
  flex: none;
  flex-direction: column;
  align-items: center;
  width: 13px;
  background: #efefef;
}

.vscroll .up,
.vscroll .down {
  border: 4px solid transparent;
}

.vscroll .up {
  margin-top: 3px;
  border-bottom-color: #444;
}

.vscroll .down {
  margin: auto 0 2px;
  border-top-color: #444;
}

.vscroll .thumb {
  width: 13px;
  height: 118px;
  margin-top: 7px;
  border: 1px solid #979797;
  background: linear-gradient(#555 1px, transparent 1px 3px, #555 3px 4px, transparent 4px 6px, #555 6px 7px) center / 7px 7px no-repeat, linear-gradient(90deg, #f3f3f3, #c4c4c4);
}

.hscroll {
  display: flex;
  flex: none;
  align-items: center;
  height: 15px;
  margin: 0 15px -15px 0;
  background: #efefef;
}

.hscroll .thumb {
  width: 73px;
  height: 15px;
  border: 1px solid #979797;
  border-left: 0;
  background: linear-gradient(90deg, #555 1px, transparent 1px 3px, #555 3px 4px, transparent 4px 6px, #555 6px 7px) 28px center / 7px 7px no-repeat, linear-gradient(#f3f3f3, #c4c4c4);
}

.hscroll .right {
  margin: 0 2px 0 auto;
  border: 4px solid transparent;
  border-left-color: #444;
}

.splitter {
  position: absolute;
  top: 239px;
  right: -9px;
  z-index: 1;
  display: flex;
  align-items: center;
  justify-content: center;
  width: 9px;
  height: 39px;
  border: 1px solid #808080;
  border-left: 0;
  background: #f7f7f7;
}

.splitter .dot {
  flex: none;
}

/* model view */
.viewport {
  flex: 1;
  min-width: 0;
  background: #fff;
}

.scene {
  width: 100%;
  height: 100%;
}

.triad text {
  font: 10px "Liberation Serif", serif;
}

/* bottom */
.bottom-tabs {
  display: flex;
  flex: none;
  height: 16px;
  border: 1px solid #808080;
  border-width: 1px 0;
}

.pager {
  display: flex;
  width: 66px;
  padding-left: 2px;
}

.pager button {
  flex: 1;
  border: 1px solid #8a8a8a;
  background: #b4b4b4;
}

.pager svg {
  width: 14px;
  height: 12px;
  fill: #8a8a8a;
  stroke: #8a8a8a;
}

.btab {
  width: 57px;
  border-right: 1px solid #808080;
  background: #d4d4d4;
  line-height: 12px;
}

.btab.active {
  width: 47px;
  background: #f7f7f7;
}

.btab.study {
  width: 80px;
  padding-right: 8px;
}

.status {
  display: flex;
  flex: none;
  align-items: center;
  height: 18px;
  padding-top: 2px;
  overflow: hidden;
  line-height: 18px;
  white-space: nowrap;
}

.product {
  margin: 0 auto 0 -21px;
}

.cell {
  height: 16px;
  padding: 0 6px;
  border-right: 1px solid #d4d4d4;
  line-height: 18px;
}

.cell.edit {
  margin-left: 7px;
  border-left: 1px solid #d4d4d4;
  padding: 0 6px 0 3px;
}

.cell.gap {
  width: 16px;
}

.custom {
  padding: 0 5px 0 29px;
}

.window-edge {
  flex: none;
  height: 7px;
  border-bottom: 1px solid #4a4a5c;
  background: #d5d7e4;
}
```
